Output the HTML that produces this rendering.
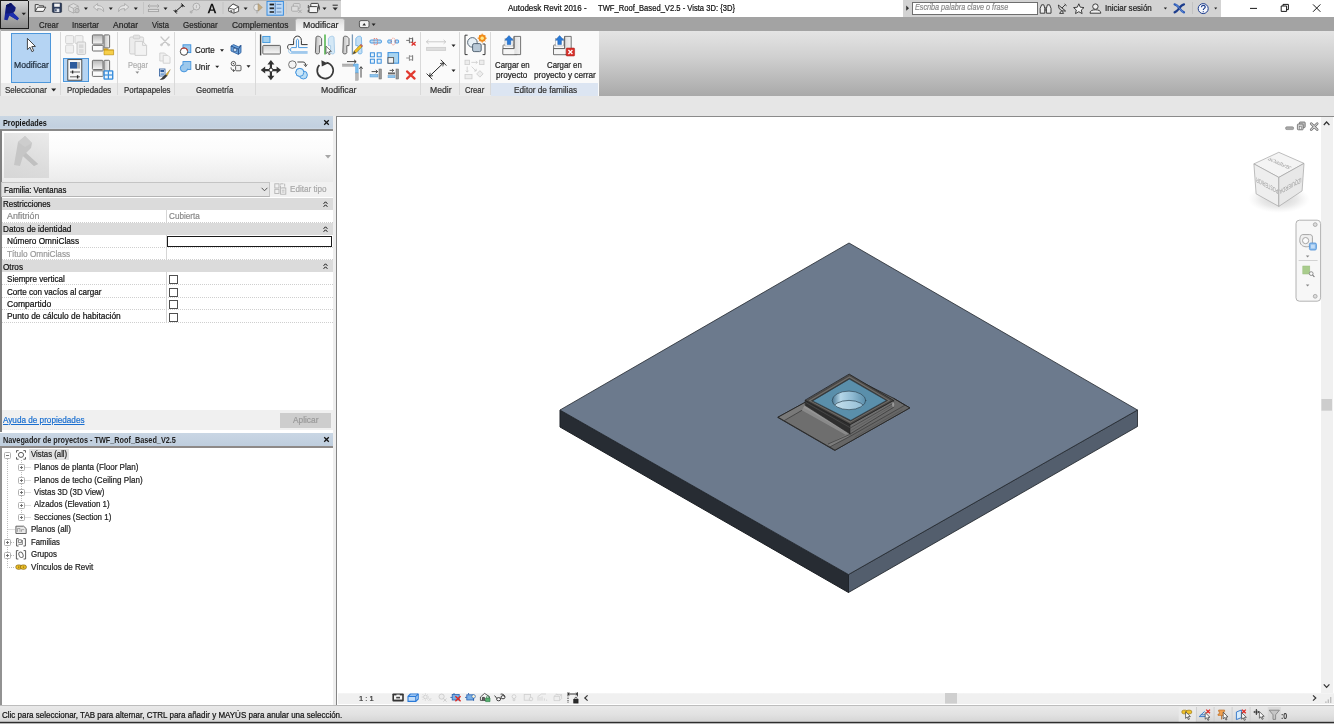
<!DOCTYPE html>
<html>
<head>
<meta charset="utf-8">
<title>Autodesk Revit 2016</title>
<style>
html,body{margin:0;padding:0;overflow:hidden;}
body{width:1334px;height:724px;overflow:hidden;position:relative;background:#e6e6e6;font-family:"Liberation Sans",sans-serif;font-size:8.5px;color:#222;}
.a{position:absolute;}
.t{position:absolute;white-space:nowrap;line-height:12px;height:12px;transform-origin:0 50%;-webkit-text-stroke:0.22px currentColor;}
svg{position:absolute;overflow:visible;}
/* title bar */
#titlebar{left:0;top:0;width:1334px;height:16.7px;background:#fff;}
#qat{left:28px;top:0;width:313px;height:16.7px;background:#d3d3d3;}
#appbtn{left:0;top:0;width:28.6px;height:28.6px;background:linear-gradient(#d6d6d6,#b4b4b4 40%,#8e8e8e);border:1px solid #1c1c1c;border-right-width:0.7px;border-bottom-width:0.8px;box-sizing:border-box;}
#info{left:903px;top:0;width:318px;height:16.7px;background:#d3d3d3;}
#search{left:912px;top:1.5px;width:126px;height:13.5px;background:#fff;border:1px solid #6e6e6e;box-sizing:border-box;}
/* tab bar */
#tabbar{left:0;top:16.7px;width:1334px;height:14.1px;background:#a3a3a3;}
#acttab{left:296.2px;top:19.3px;width:47.8px;height:11.6px;background:linear-gradient(#dadada,#ececec 50%,#f6f6f6);border-radius:1.5px 1.5px 0 0;box-shadow:0 0 0 0.6px #c4c4c4;}
.tab{top:19px;color:#1a1a1a;font-size:8.8px;}
/* ribbon */
#ribbon{left:0;top:30.6px;width:598.5px;height:65.4px;background:#fafafa;}
#ribbonR{left:598.5px;top:30.8px;width:735.5px;height:65.2px;background:linear-gradient(#e4e4e4,#d0d0d0 40%,#a9a9a9);}
#ptitles{left:0;top:83px;width:598px;height:13px;background:#ebebeb;}
.pt{top:85px;color:#333;font-size:8.6px;}
.sep{top:32px;width:1px;height:63px;background:#d9d9d9;}
/* left dock */
#leftdock{left:0;top:116px;width:333.4px;height:590px;background:#fff;}
.ptitle{left:0;width:334px;height:12px;background:#c9d6e4;}
.hdr{left:2px;width:331px;height:12px;background:#dbdbdb;}
.chev{width:7px;height:8px;}
.vdiv{left:166px;width:1px;background:#d6d6d6;}
.hl{left:2px;width:331px;height:0;border-top:1px dotted #cfcfcf;}
.cb{left:169.3px;width:8.6px;height:8.6px;border:1px solid #505050;box-sizing:border-box;background:#fff;}
/* viewport */
#vp{left:336.3px;top:115.8px;width:997.7px;height:590px;background:#fff;border-left:1.7px solid #848484;border-top:1.4px solid #8a8a8a;box-sizing:border-box;}
#vscroll{left:1321.1px;top:117px;width:12px;height:576px;background:#f0f0f0;}
#vbar{left:338px;top:692.6px;width:996px;height:11.2px;background:linear-gradient(#f6f6f6,#f0f0f0 12%,#f0f0f0);}
/* status */
#status{left:0;top:705px;width:1334px;height:19px;background:linear-gradient(#e9e9e9,#e2e2e2 45%,#d2d2d2);border-top:1px solid #bdbdbd;box-sizing:border-box;}
</style>
</head>
<body>
<div class="a" id="titlebar"></div>
<div class="a" id="qat"></div>
<div class="a" id="info"></div>
<div class="a" id="search"></div>
<div class="a" id="tabbar"></div>
<div class="a" id="acttab"></div>
<div class="a" id="appbtn"></div>
<div class="a" id="ribbon"></div>
<div class="a" id="ribbonR"></div>
<div class="a" id="ptitles"></div>
<svg style="left:0;top:0" width="1334" height="32" viewBox="0 0 1334 32">
  <defs>
    <g id="dd"><polygon points="-2,-1 2,-1 0,1.4" fill="#222"/></g>
  </defs>
  <!-- top hairline on QAT -->
  <rect x="28" y="0" width="313" height="1" fill="#b4b4b4"/>
  <!-- R logo -->
  <g>
    <polygon points="6.1,5.2 10.8,3.1 15.5,7.5 15,10.8 13.1,12.7 18.8,18.3 17.4,20.2 9.4,15.5 7.5,20.2 4.2,19.7" fill="#17249a"/>
    <polygon points="6.1,5.2 10.8,3.1 15.5,7.5 15,10.8 13.1,12.7 9.8,13.4 5.6,13.6" fill="#101a78"/>
    <polygon points="6.1,5.2 10.8,3.1 12.4,4.6 8.2,7.4" fill="#0b135c"/>
    <polygon points="9.8,13.4 13.1,12.7 18.8,18.3 17.4,20.2 9.4,15.5" fill="#1c2eae"/>
    <polygon points="21.6,12.8 26,12.8 23.8,15.2" fill="#222"/>
  </g>
  <!-- open folder -->
  <g stroke="#333" stroke-width="0.9" fill="#f2f2f2" stroke-linejoin="round">
    <path d="M35.2,11.4 V4.6 H38.4 L39.4,5.8 H43.6 V7.2"/>
    <path d="M35.2,11.4 L37.6,7.2 H45.8 L43.4,11.4 Z" fill="#fafafa"/>
  </g>
  <!-- save -->
  <g>
    <rect x="52.4" y="3" width="9.2" height="9.4" rx="0.8" fill="#2c3c5c" stroke="#1c2638" stroke-width="0.6"/>
    <rect x="54.2" y="3.6" width="5.6" height="3.2" fill="#f4f4f4"/>
    <rect x="54.6" y="8.6" width="4.8" height="3.4" fill="#e2e6ee"/>
    <rect x="55.2" y="9.2" width="1.4" height="2.2" fill="#2c3c5c"/>
  </g>
  <!-- sync (disabled) -->
  <g stroke="#a6a6a6" stroke-width="0.8" fill="#dedede" stroke-linejoin="round">
    <path d="M68.6,6 L73.4,3.6 L78.2,6 V10.6 L73.4,13 L68.6,10.6 Z"/>
    <path d="M68.6,6 L73.4,8.4 L78.2,6 M73.4,8.4 V13" fill="none"/>
    <circle cx="77" cy="10.6" r="2.2" fill="#c4c4c4" stroke="#a0a0a0"/>
  </g>
  <use href="#dd" x="85.9" y="8.6"/>
  <!-- undo -->
  <path d="M93.4,7 L97.6,3.6 V5.6 C101.6,5.6 104,7.6 103.6,11.6 C102.6,9.4 100.6,8.6 97.6,8.6 V10.6 Z" fill="#e4e4e4" stroke="#a4a4a4" stroke-width="0.8" stroke-linejoin="round"/>
  <use href="#dd" x="110.8" y="8.6"/>
  <!-- redo -->
  <path d="M128.8,7 L124.6,3.6 V5.6 C120.6,5.6 118.2,7.6 118.6,11.6 C119.6,9.4 121.6,8.6 124.6,8.6 V10.6 Z" fill="#e4e4e4" stroke="#a4a4a4" stroke-width="0.8" stroke-linejoin="round"/>
  <use href="#dd" x="135.8" y="8.6"/>
  <rect x="143" y="2" width="1" height="12" fill="#c4c4c4"/>
  <!-- aligned dimension (grey) -->
  <g stroke="#a2a2a2" stroke-width="0.9" fill="none">
    <path d="M148,6 H159 M149.6,4.4 L148,6 L149.6,7.6 M157.4,4.4 L159,6 L157.4,7.6"/>
    <rect x="148.4" y="9.4" width="10.2" height="2.2" fill="#dcdcdc"/>
  </g>
  <use href="#dd" x="165.5" y="8.6"/>
  <!-- measure -->
  <g stroke="#1e1e1e" stroke-width="1" fill="none">
    <path d="M175.2,11.8 L183,5"/>
    <path d="M173.6,10 L176.8,13.6 M181.4,3.4 L184.6,7" stroke-width="0.9"/>
    <path d="M175.2,11.8 L175.6,9.6 M175.2,11.8 L177.4,11.6 M183,5 L180.8,5.2 M183,5 L182.6,7.2" stroke-width="0.8"/>
  </g>
  <!-- tag (grey) -->
  <g stroke="#a8a8a8" stroke-width="0.9" fill="none">
    <circle cx="196.4" cy="6.6" r="3.4" fill="#dedede"/>
    <path d="M194,9.2 L191.4,11.6"/>
    <circle cx="191.2" cy="12" r="1" fill="#c8c8c8"/>
    <path d="M196.4,5 V8.2" stroke-width="0.7"/>
  </g>
  <!-- A text -->
  <path d="M207.6,13.2 L211.1,3.8 H212.8 L216.3,13.2 H214.5 L213.7,10.8 H210.2 L209.4,13.2 Z M210.7,9.4 H213.2 L211.95,5.6 Z" fill="#151515"/>
  <rect x="222.5" y="2" width="1" height="12" fill="#c4c4c4"/>
  <!-- 3D house -->
  <g stroke="#3a3a3a" stroke-width="0.8" stroke-linejoin="round">
    <path d="M228.6,8 L233,4 L238.6,6.8 V11.4 L233.6,13.2 L228.6,11.2 Z" fill="#f6f6f6"/>
    <path d="M228.6,8 L233,4 L238.6,6.8 L234,9.4 Z" fill="#fdfdfd"/>
    <path d="M234,9.4 V13.2" fill="none"/>
    <path d="M230.4,9.8 V12 L232.2,12.6 V10.4 Z" fill="#6a6a6a" stroke="none"/>
  </g>
  <use href="#dd" x="245.6" y="8.6"/>
  <!-- section -->
  <g>
    <circle cx="257" cy="7.4" r="3.3" fill="#e8e8e8" stroke="#a2a2a2" stroke-width="0.8"/>
    <polygon points="258,3.6 262.4,7.4 258,11.2" fill="#c4ab82" stroke="#a09070" stroke-width="0.5"/>
    <path d="M257,10.8 V13.4" stroke="#9a9a9a" stroke-width="0.8"/>
  </g>
  <!-- thin lines (active) -->
  <rect x="267" y="1.4" width="16.4" height="13.8" fill="#bcd9f6" stroke="#3a8ee0" stroke-width="1"/>
  <g>
    <rect x="269.6" y="3.6" width="4.4" height="1.8" fill="#1a1a1a"/>
    <rect x="269.6" y="7.4" width="4.4" height="1.8" fill="#2a2a2a"/>
    <rect x="269.6" y="11.2" width="4.4" height="1.6" fill="#2a2a2a"/>
    <path d="M275.2,2.6 V13.8" stroke="#2a5a9a" stroke-width="0.7"/>
    <path d="M276.6,4.4 H281.4 M276.6,8.2 H281.4" stroke="#3a6aaa" stroke-width="0.7"/>
    <rect x="276.6" y="11.2" width="4.8" height="1.6" fill="#8aa6c8"/>
  </g>
  <rect x="286" y="2" width="1" height="12" fill="#cccccc"/>
  <!-- close hidden (grey) -->
  <g stroke="#a8a8a8" stroke-width="0.9" fill="#dcdcdc">
    <rect x="293.4" y="3.6" width="6.6" height="4.8" rx="0.8"/>
    <rect x="291.6" y="6.2" width="6.6" height="5" rx="0.8"/>
    <path d="M298.4,9.8 L301.6,13 M301.6,9.8 L298.4,13" fill="none" stroke-width="1"/>
  </g>
  <!-- switch windows -->
  <g stroke="#2e2e2e" stroke-width="0.9" fill="#f4f4f4">
    <rect x="310.8" y="3.4" width="7.6" height="5.4" rx="0.8"/>
    <rect x="309" y="6.6" width="8.6" height="6" rx="0.8"/>
    <path d="M318.6,5.2 C319.8,6.6 319.8,9 318.8,10.4 M308.4,5 L308.2,8 M308.2,10 V12.4" fill="none" stroke-width="0.8"/>
  </g>
  <use href="#dd" x="324.5" y="8.6"/>
  <path d="M332.6,5.2 H337.8" stroke="#2a2a2a" stroke-width="1"/>
  <polygon points="332.6,7.4 337.8,7.4 335.2,10.4" fill="#2a2a2a"/>
  <!-- tab-bar small icon -->
  <rect x="359.4" y="20.6" width="9.6" height="7" rx="1.6" fill="#f2f2f2" stroke="#3a3a3a" stroke-width="0.8"/>
  <polygon points="362.4,25.4 366,25.4 364.2,23" fill="#2a2a2a"/>
  <use href="#dd" x="373.6" y="24.6"/>
  <!-- info center -->
  <polygon points="906.2,5.6 906.2,10.8 909,8.2" fill="#333"/>
  <g stroke="#2e2e2e" stroke-width="0.9" fill="none">
    <!-- binoculars -->
    <path d="M1040.2,13.2 V8.4 L1041.6,4.8 H1043.8 L1044.8,8.4 V13.2 Z M1046.4,13.2 V8.4 L1047.4,4.8 H1049.6 L1051,8.4 V13.2 Z" fill="#ededed"/>
    <path d="M1044.8,8 H1046.4 M1044.8,10 H1046.4" />
    <!-- satellite -->
    <path d="M1058.4,5 C1058.4,9.4 1061.4,11.4 1065.6,11 L1058.4,5 M1062,8 L1065.4,4.6 M1064.6,4 L1066.6,5.8" />
    <path d="M1059.6,13.4 L1061.6,10.6 L1063.6,13.4 Z" fill="#ededed"/>
    <!-- star -->
    <path d="M1078.8,3.8 L1080.3,7.2 L1084,7.6 L1081.3,10 L1082.1,13.6 L1078.8,11.7 L1075.5,13.6 L1076.3,10 L1073.6,7.6 L1077.3,7.2 Z" fill="#f0f0f0" stroke-linejoin="round"/>
    <!-- user -->
    <circle cx="1095.4" cy="6.6" r="2.7" fill="#f0f0f0"/>
    <path d="M1090,13.2 C1090,10.6 1092.4,9.8 1095.4,9.8 C1098.4,9.8 1100.8,10.6 1100.8,13.2 Z" fill="#f0f0f0"/>
  </g>
  <polygon points="1163.8,7.4 1167,7.4 1165.4,9.4" fill="#222"/>
  <!-- exchange X -->
  <g fill="none" stroke-linecap="round">
    <path d="M1174.6,4.4 C1178.6,5 1180,11 1184,12.4" stroke="#2a58b4" stroke-width="2.2"/>
    <path d="M1184,4.4 C1180,5 1178.6,11 1174.6,12.4" stroke="#1c3c8c" stroke-width="2.2"/>
    <path d="M1176,4.6 C1179,6 1180,10.6 1183,12.2" stroke="#7aa2e8" stroke-width="0.7"/>
  </g>
  <rect x="1192" y="2" width="1" height="12" fill="#c2c2c2"/>
  <!-- help -->
  <circle cx="1203.2" cy="8.6" r="5" fill="#f4f6fc" stroke="#1c3c8c" stroke-width="1"/>
  <path d="M1201.4,7.2 C1201.4,4.8 1205.2,4.8 1205.2,7 C1205.2,8.4 1203.3,8.4 1203.3,10 M1203.3,11.2 V12.2" fill="none" stroke="#1c3c8c" stroke-width="1.2"/>
  <polygon points="1214.2,7.6 1217.2,7.6 1215.7,9.4" fill="#222"/>
  <!-- window controls -->
  <g stroke="#1a1a1a" stroke-width="1" fill="none">
    <path d="M1250,8.4 H1257"/>
    <path d="M1281.2,6 H1286.6 V11.4 H1281.2 Z M1283,6 V4.4 H1288.4 V9.6 H1286.6"/>
    <path d="M1313,4.4 L1320.4,11.8 M1320.4,4.4 L1313,11.8"/>
  </g>

</svg>

<!-- ribbon frame -->
<div class="a" style="left:0;top:30px;width:1px;height:66px;background:#c8c8c8;"></div>
<div class="a" style="left:491px;top:83px;width:107px;height:13px;background:#dce5f2;"></div>
<div class="a sep" style="left:60px;"></div>
<div class="a sep" style="left:117px;"></div>
<div class="a sep" style="left:174px;"></div>
<div class="a sep" style="left:255px;"></div>
<div class="a sep" style="left:420px;"></div>
<div class="a sep" style="left:459px;"></div>
<div class="a sep" style="left:490px;"></div>
<!-- Modificar big button -->
<div class="a" style="left:11px;top:33px;width:40px;height:50px;background:#b5d4f3;border:1px solid #4d97db;box-sizing:border-box;"></div>
<!-- Properties active button -->
<div class="a" style="left:62.5px;top:58px;width:26.5px;height:24px;background:#b5d4f3;border:1px solid #4d97db;box-sizing:border-box;"></div>
<svg style="left:0;top:0" width="600" height="100" viewBox="0 0 600 100">
  <defs>
    <linearGradient id="gP" x1="0" y1="0" x2="0" y2="1"><stop offset="0" stop-color="#b8b8b8"/><stop offset="1" stop-color="#f6f6f6"/></linearGradient>
    <linearGradient id="gP2" x1="0" y1="0" x2="1" y2="0"><stop offset="0" stop-color="#c4c4c4"/><stop offset="1" stop-color="#f4f4f4"/></linearGradient>
    <g id="dd2"><polygon points="-2,-1.1 2,-1.1 0,1.3" fill="#222"/></g>
    <g id="panels">
      <rect x="0.4" y="0.5" width="10.6" height="9.2" rx="0.8" fill="url(#gP)" stroke="#6e6e6e" stroke-width="1"/>
      <rect x="12" y="0.5" width="5.6" height="13" rx="0.8" fill="url(#gP2)" stroke="#6e6e6e" stroke-width="1"/>
      <rect x="0.4" y="11" width="10.8" height="5.6" rx="0.8" fill="#fafafa" stroke="#6e6e6e" stroke-width="1"/>
    </g>
  </defs>
  <!-- cursor -->
  <path d="M27.4,38.4 V49.6 L30,47.2 L31.9,51.6 L33.7,50.8 L31.8,46.6 L35.4,46.4 Z" fill="#fff" stroke="#333" stroke-width="0.9" stroke-linejoin="round"/>
  <polygon points="51.2,88.6 56.2,88.6 53.7,91.4" fill="#222"/>
  <!-- type properties (disabled) -->
  <g stroke="#d0d0d0" stroke-width="0.9" fill="#f0f0f0">
    <rect x="65.6" y="35.6" width="8" height="8" rx="1.2"/>
    <rect x="75" y="35.6" width="8" height="8" rx="1.2"/>
    <rect x="65.6" y="45" width="8" height="8" rx="1.2"/>
    <rect x="77" y="42" width="8.6" height="12.4" rx="1" fill="#ececec" stroke="#c4c4c4"/>
    <rect x="79" y="44.4" width="4.4" height="3.6" fill="#d8d8d8" stroke="none"/>
    <path d="M79,50 H83.6 M79,52 H83.6" stroke="#c8c8c8"/>
  </g>
  <!-- family category -->
  <use href="#panels" x="92" y="34.4"/>
  <g>
    <path d="M104,48.8 H107.6 L108.4,49.8 H113.6 V54.8 H104 Z" fill="#d8a418" stroke="#b08410" stroke-width="0.6"/>
    <rect x="104.4" y="50.6" width="8.8" height="3.8" fill="#f6cf4a"/>
  </g>
  <!-- properties (active) -->
  <rect x="67.8" y="59.6" width="14" height="20.6" fill="#f8f8f8" stroke="#3c3c3c" stroke-width="0.9"/>
  <rect x="70" y="62" width="7" height="6.6" fill="#2c5a9c"/>
  <rect x="77" y="62" width="3" height="6.6" fill="#b0b0b0"/>
  <path d="M70,72 H80 M70,76.8 H80" stroke="#3a3a3a" stroke-width="0.8"/>
  <path d="M72.6,70.4 V73.6 M77.6,75.2 V78.4" stroke="#2a2a2a" stroke-width="1.4"/>
  <!-- family types -->
  <use href="#panels" x="92" y="59.8"/>
  <g fill="#eaf4fc" stroke="#3a8edc" stroke-width="1.2">
    <rect x="103.4" y="70.2" width="10" height="9.6" rx="1.2" fill="#3a8edc" stroke="none"/>
    <rect x="104.8" y="71.6" width="3" height="2.8" stroke="none"/>
    <rect x="109" y="71.6" width="3" height="2.8" stroke="none"/>
    <rect x="104.8" y="75.6" width="3" height="2.8" stroke="none"/>
    <rect x="109" y="75.6" width="3" height="2.8" stroke="none"/>
  </g>
  <!-- paste (disabled) -->
  <g stroke="#cfcfcf" stroke-width="1" fill="#ececec" stroke-linejoin="round">
    <rect x="129.6" y="37" width="14" height="17" rx="1.4"/>
    <rect x="133.4" y="35.2" width="6.4" height="3.6" rx="1" fill="#e4e4e4"/>
    <path d="M135,41.4 H142.6 L146.6,45.4 V55.4 H135 Z" fill="#f2f2f2"/>
    <path d="M142.6,41.4 V45.4 H146.6" fill="none"/>
  </g>
  <polygon points="135.4,71.6 139.2,71.6 137.3,73.8" fill="#8c8c8c"/>
  <!-- scissors (disabled) -->
  <g stroke="#c8c8c8" stroke-width="1.3" fill="none" stroke-linecap="round">
    <path d="M161,37 L168.6,45 M169,37 L161.4,45"/>
    <circle cx="161.4" cy="44.8" r="1" stroke-width="0.8"/><circle cx="168.6" cy="44.8" r="1" stroke-width="0.8"/>
  </g>
  <!-- copy (disabled) -->
  <g stroke="#cfcfcf" stroke-width="0.9" fill="#efefef" stroke-linejoin="round">
    <path d="M159.8,53 H164.6 L166.6,55 V61 H159.8 Z"/>
    <path d="M163.2,55.4 H168 L170,57.4 V63.2 H163.2 Z" fill="#f4f4f4"/>
  </g>
  <!-- match properties -->
  <g>
    <rect x="159.4" y="69" width="5.6" height="7" fill="#f4f8fc" stroke="#2c5a9c" stroke-width="0.8"/>
    <rect x="160.4" y="70" width="3.6" height="2.2" fill="#2c5a9c"/>
    <rect x="160.4" y="73.2" width="3.6" height="1.8" fill="#7aa4d6"/>
    <path d="M170.2,69.6 L165.8,74.6 L167.2,75.8 Z" fill="#e8b830" stroke="#8a6a20" stroke-width="0.4"/>
    <path d="M165.8,74.4 L167.4,75.8 L164.6,78.8 C163,80 160.6,79.6 159.6,79.4 C161.6,78.6 162.4,77.2 163.4,76.2 Z" fill="#3a3a3a"/>
  </g>
  <!-- Corte icon -->
  <rect x="183" y="44.8" width="7.8" height="7.8" fill="#9cc8ec" stroke="#3a8edc" stroke-width="0.9"/>
  <circle cx="184" cy="51.6" r="3.7" fill="#fff" stroke="#333" stroke-width="0.9"/>
  <path d="M181.2,49.2 A3.7,3.7 0 0 1 187.6,50.8" fill="none" stroke="#e03a2a" stroke-width="1"/>
  <use href="#dd2" x="222" y="50.4"/>
  <!-- Unir icon -->
  <rect x="183" y="61.6" width="7.8" height="7.8" fill="#9cc8ec" stroke="#3a8edc" stroke-width="0.9"/>
  <circle cx="184" cy="68.2" r="3.7" fill="#9cc8ec" stroke="#3a8edc" stroke-width="0.9"/>
  <rect x="183.6" y="62.2" width="6.6" height="6.4" fill="#9cc8ec"/>
  <use href="#dd2" x="217.2" y="66.8"/>
  <!-- geometry right-top (wall joins) -->
  <g stroke="#2a5a9c" stroke-width="0.8" stroke-linejoin="round">
    <path d="M231,46 L233.6,44.6 L238.4,46.8 L241,45.4 V52.6 L238.4,54.4 L231,51 Z" fill="#6aa4dc"/>
    <path d="M231,46 L238.4,49.2 V54.4 M238.4,49.2 L241,45.4" fill="none" stroke="#1c3e78"/>
    <rect x="233.4" y="48.4" width="3.2" height="3" fill="#cfe4f6" stroke="#1c3e78" stroke-width="0.6"/>
  </g>
  <!-- geometry right-bottom -->
  <g stroke="#3a3a3a" stroke-width="0.8" fill="#f2f2f2">
    <circle cx="233.4" cy="63.6" r="2.2"/>
    <circle cx="233.4" cy="63.6" r="0.7" fill="#3a3a3a" stroke="none"/>
    <rect x="235.6" y="65.4" width="5.4" height="5.4" rx="1"/>
    <path d="M231,67.4 C231,69.8 232.4,70.6 234.4,70.6 M233,69.4 L234.6,70.6 L233,71.8" fill="none"/>
  </g>
  <use href="#dd2" x="248.5" y="66.4"/>
  <defs>
    <linearGradient id="gA" x1="0" y1="0" x2="0" y2="1"><stop offset="0" stop-color="#d0d0d0"/><stop offset="1" stop-color="#f8f8f8"/></linearGradient>
    <linearGradient id="gM" x1="0" y1="0" x2="1" y2="0"><stop offset="0" stop-color="#bdbdbd"/><stop offset="1" stop-color="#f2f2f2"/></linearGradient>
  </defs>
  <!-- align -->
  <path d="M260.6,34.4 V55.4" stroke="#444" stroke-width="1.4"/>
  <rect x="262.8" y="36.4" width="7.2" height="6.2" fill="#a4d0ee" stroke="#3a94dc" stroke-width="0.9"/>
  <rect x="262.8" y="45.4" width="17.6" height="8.6" rx="0.8" fill="url(#gA)" stroke="#555" stroke-width="0.9"/>
  <!-- offset -->
  <g fill="none" stroke-linejoin="round">
    <path d="M307.6,44.6 H301.4 V40.6 C301.4,34.6 293.6,34.6 293.6,40.6 V44.6 H289.4 C287,44.6 287,49 289.4,49.6" stroke="#333" stroke-width="1"/>
    <path d="M307.6,47.6 H298.6 V41 C298.6,38.6 296.4,38.6 296.4,41 V47.6 H291.6 C290.2,47.6 290.2,52 291.6,52 H307.6" stroke="#4a9ae0" stroke-width="1"/>
    <path d="M289.4,49.6 C288,50.4 288.6,53 290.4,53.4 H307.6" stroke="#8abfe8" stroke-width="0.8"/>
  </g>
  <!-- mirror pick axis -->
  <g stroke-linejoin="round">
    <path d="M316,37.6 C316,35.6 320.2,35.6 321.6,38.6 V45.6 H319.4 V52.6 C319.4,54.4 315.4,54.4 315.4,52.6 Z" fill="url(#gM)" stroke="#555" stroke-width="0.9"/>
    <path d="M334,37.6 C334,35.6 329.8,35.6 328.4,38.6 V45.6 H330.6 V52.6 C330.6,54.4 334.6,54.4 334.6,52.6 Z" fill="#d4e8f6" stroke="#9cc4e4" stroke-width="0.8"/>
    <path d="M325,34.4 V54.6" stroke="#3fae3a" stroke-width="1.4"/>
    <path d="M326,46.2 V53.6 L327.8,52 L329,54.8 L330.2,54.2 L329,51.6 L331.4,51.4 Z" fill="#fff" stroke="#444" stroke-width="0.7"/>
  </g>
  <!-- mirror draw axis -->
  <g stroke-linejoin="round">
    <path d="M343.4,37.6 C343.4,35.6 347.6,35.6 349,38.6 V45.6 H346.8 V52.6 C346.8,54.4 342.8,54.4 342.8,52.6 Z" fill="url(#gM)" stroke="#555" stroke-width="0.9"/>
    <path d="M361.4,37.6 C361.4,35.6 357.2,35.6 355.8,38.6 V45.6 H358 V52.6 C358,54.4 362,54.4 362,52.6 Z" fill="#c4dff4" stroke="#6aaee6" stroke-width="0.8"/>
    <path d="M352.4,34.4 V54.6" stroke="#7a9ab8" stroke-width="1.3"/>
    <path d="M353,54 L354.2,51 L360.2,45 L362,46.8 L356,52.8 Z" fill="#f0c020" stroke="#9a7410" stroke-width="0.6"/>
    <path d="M353,54 L354.2,51 L356,52.8 Z" fill="#444"/>
    <path d="M360.2,45 L361,44.2 L362.8,46 L362,46.8 Z" fill="#e06a5a" stroke="#9a3a30" stroke-width="0.4"/>
  </g>
  <!-- small col 1 -->
  <g>
    <rect x="370" y="40" width="11.4" height="3" rx="1" fill="#bfe0f6" stroke="#3a8edc" stroke-width="0.9"/>
    <rect x="374" y="38.6" width="3.4" height="6" fill="none" stroke="#e05a4a" stroke-width="0.7" stroke-dasharray="1.2 0.8"/>
    <g fill="#e8f4fc" stroke="#3a8edc" stroke-width="1">
      <rect x="370.4" y="52.8" width="4" height="4"/><rect x="377.2" y="52.8" width="4" height="4"/>
      <rect x="370.4" y="59.2" width="4" height="4"/><rect x="377.2" y="59.2" width="4" height="4"/>
    </g>
    <path d="M371.6,71.6 H377.6 M375.8,70 L377.6,71.6 L375.8,73.2" fill="none" stroke="#333" stroke-width="0.9"/>
    <rect x="370" y="74.4" width="8" height="2.6" fill="#8ec4ec" stroke="#5a9ad0" stroke-width="0.5"/>
    <rect x="379" y="69" width="2.4" height="10" fill="#9a9a9a" stroke="#666" stroke-width="0.5"/>
  </g>
  <!-- small col 2 -->
  <g>
    <rect x="387.8" y="40" width="3.6" height="3" rx="0.8" fill="#bfe0f6" stroke="#3a8edc" stroke-width="0.9"/>
    <rect x="395" y="40" width="3.6" height="3" rx="0.8" fill="#bfe0f6" stroke="#3a8edc" stroke-width="0.9"/>
    <ellipse cx="393.2" cy="41.5" rx="2.2" ry="3.4" fill="none" stroke="#e05a4a" stroke-width="0.7" stroke-dasharray="1.2 0.8"/>
    <rect x="388" y="52.6" width="10.6" height="10.6" fill="#a8d4f0" stroke="#3a8edc" stroke-width="1"/>
    <rect x="388" y="57.6" width="5.6" height="5.6" fill="#f2f2f2" stroke="#555" stroke-width="0.9"/>
    <path d="M389.6,70.4 H393.6 M392,69 L393.6,70.4 L392,71.8" fill="none" stroke="#333" stroke-width="0.8"/>
    <rect x="388" y="72.4" width="7" height="2" fill="#6a6a6a"/>
    <rect x="388" y="75.4" width="7" height="2.4" fill="#8ec4ec" stroke="#5a9ad0" stroke-width="0.4"/>
    <rect x="396" y="69" width="2.6" height="10" fill="#9a9a9a" stroke="#666" stroke-width="0.5"/>
  </g>
  <!-- small col 3 : unpin, pin, delete -->
  <g fill="none" stroke="#555" stroke-width="0.8">
    <path d="M406.2,40.4 H409.4 M409.4,37.6 V43.2 M409.4,38.6 H412.6 V42.2 H409.4 M412.6,37.4 V43.4"/>
    <path d="M411.6,42 L415.6,45.6 M415.6,42 L411.6,45.6" stroke="#e0302a" stroke-width="1.3"/>
    <path d="M406.2,58 H409.4 M409.4,55.2 V60.8 M409.4,56.2 H412.6 V59.8 H409.4 M412.6,55 V61" stroke="#7a7a7a"/>
  </g>
  <path d="M407,71.4 L414.6,78.6 M414.6,71.4 L407,78.6" stroke="#e23a30" stroke-width="2.2" stroke-linecap="round"/>
  <!-- move -->
  <g fill="#333">
    <polygon points="270.9,59.9 274.4,64.4 272,64.4 272,68.4 269.8,68.4 269.8,64.4 267.4,64.4"/>
    <polygon points="270.9,80.2 274.4,75.7 272,75.7 272,71.7 269.8,71.7 269.8,75.7 267.4,75.7"/>
    <polygon points="260.7,70.05 265.2,66.55 265.2,68.95 269.2,68.95 269.2,71.15 265.2,71.15 265.2,73.55"/>
    <polygon points="281.1,70.05 276.6,66.55 276.6,68.95 272.6,68.95 272.6,71.15 276.6,71.15 276.6,73.55"/>
    <rect x="269.4" y="68.55" width="3" height="3" fill="#fff" stroke="#333" stroke-width="0.7"/>
  </g>
  <!-- copy -->
  <circle cx="292.4" cy="64.6" r="3.8" fill="#f4f4f4" stroke="#555" stroke-width="0.8"/>
  <path d="M297.4,62 H303 C305,62 305.6,63.4 305.6,65.4 M304,64.4 L305.6,66.6 L307.2,64.4" fill="none" stroke="#333" stroke-width="0.9"/>
  <circle cx="299.8" cy="72.4" r="4" fill="#b8dcf4" stroke="#3a8edc" stroke-width="0.9"/>
  <circle cx="303.4" cy="75" r="4" fill="#b8dcf4" stroke="#3a8edc" stroke-width="0.9"/>
  <circle cx="299.8" cy="72.4" r="4" fill="#cfe8f8" stroke="#3a8edc" stroke-width="0.9"/>
  <!-- rotate -->
  <path d="M326.4,62.6 A8,8 0 1 1 319.4,65" fill="none" stroke="#3a3a3a" stroke-width="1.7"/>
  <polygon points="321.4,60.2 328,63.4 321.8,66.4" fill="#3a3a3a"/>
  <!-- trim/extend corner -->
  <g>
    <path d="M347,61.6 H356 M354,59.8 L356.2,61.6 L354,63.4" fill="none" stroke="#333" stroke-width="0.9"/>
    <rect x="342.6" y="64" width="11" height="2.2" fill="#b4b4b4" stroke="#8a8a8a" stroke-width="0.4"/>
    <path d="M353.6,64 H358.2 V73 H355.6 V66.2 H353.6 Z" fill="#7fc0ee" stroke="#4a9ae0" stroke-width="0.5"/>
    <rect x="355.6" y="73" width="2.6" height="7.2" fill="#b4b4b4" stroke="#8a8a8a" stroke-width="0.4"/>
    <path d="M361,77.6 V67 M359.4,68.8 L361,66.6 L362.6,68.8" fill="none" stroke="#333" stroke-width="0.9"/>
  </g>
  <!-- measure top (disabled) -->
  <g stroke="#c6c6c6" stroke-width="0.9" fill="none">
    <path d="M426.4,41.8 H445.8 M428.6,39.8 L426.4,41.8 L428.6,43.8 M443.6,39.8 L445.8,41.8 L443.6,43.8"/>
    <rect x="426.6" y="47.4" width="19" height="3" fill="#dedede" stroke="#cfcfcf"/>
  </g>
  <use href="#dd2" x="453.5" y="45.6"/>
  <!-- measure bottom -->
  <g stroke="#222" stroke-width="1" fill="none">
    <path d="M429.4,76.4 L443.6,62.8"/>
    <path d="M426.6,73.6 L432.4,79.4 M440.8,59.8 L446.4,65.6" stroke-width="0.9"/>
    <path d="M429.4,76.4 L430.2,72.8 M429.4,76.4 L433,75.6 M443.6,62.8 L440,63.6 M443.6,62.8 L442.8,66.4" stroke-width="0.8"/>
  </g>
  <use href="#dd2" x="453.5" y="70.6"/>
  <!-- create group -->
  <g fill="none" stroke="#3a3a3a" stroke-width="1">
    <path d="M467.6,35.2 H465 V54.6 H467.6 M482.6,44 H485 V54.6 H482.6"/>
    <circle cx="472.4" cy="42.4" r="4.8" fill="#e8f0f6" stroke="#4a5a6a" stroke-width="0.9"/>
    <rect x="472.6" y="43.6" width="8.6" height="8" rx="1.6" fill="#b8c8d6" stroke="#4a5a6a" stroke-width="0.9"/>
  </g>
  <g>
    <circle cx="482.2" cy="38.2" r="3.6" fill="#f08a1a"/>
    <circle cx="482.2" cy="38.2" r="1.8" fill="#ffe27a"/>
    <path d="M482.2,33.6 V42.8 M477.6,38.2 H486.8 M479,35 L485.4,41.4 M485.4,35 L479,41.4" stroke="#f08a1a" stroke-width="0.9"/>
    <circle cx="482.2" cy="38.2" r="1.6" fill="#ffe88a"/>
  </g>
  <!-- create bottom (disabled) -->
  <g stroke="#cdcdcd" stroke-width="0.8" fill="#ededed">
    <rect x="465" y="60.2" width="4.4" height="4.4"/>
    <rect x="479.6" y="60.2" width="4.4" height="4.4"/>
    <rect x="465" y="74.4" width="7" height="4.4"/>
    <rect x="477.6" y="71.6" width="4.6" height="4.6" transform="rotate(45 479.9 73.9)"/>
    <path d="M471.4,62.4 H477.4 M475.8,61 L477.4,62.4 L475.8,63.8 M467.2,66.6 V72 M465.8,70.6 L467.2,72.2 L468.6,70.6 M471.6,66.6 L476,71 M474,71 H476.2 V68.8" fill="none"/>
  </g>
  <!-- load into project -->
  <g id="loadp">
    <rect x="503" y="45" width="14.4" height="9.6" rx="0.6" fill="#fafafa" stroke="#666" stroke-width="0.9"/>
    <path d="M514,36.4 H520.6 V54.6 H503 V48.6 H514 Z" fill="url(#gM)" stroke="#666" stroke-width="0.9" stroke-linejoin="round"/>
    <rect x="503.4" y="49" width="11" height="5.2" fill="#f6f6f6"/>
    <path d="M503,48.6 H514 V36.4" fill="none" stroke="#666" stroke-width="0.9"/>
    <rect x="505" y="38.6" width="8" height="7.4" fill="#fdfdfd" stroke="#9a9a9a" stroke-width="0.5"/>
    <path d="M509,35.6 L513.2,40.2 H510.8 V44.6 H507.2 V40.2 H504.8 Z" fill="#2a7ad8" stroke="#1a5aa8" stroke-width="0.5"/>
  </g>
  <use href="#loadp" x="50.6" y="0"/>
  <rect x="566.2" y="48" width="8.4" height="8" rx="0.8" fill="#d8302a" stroke="#a01a16" stroke-width="0.5"/>
  <path d="M568.4,50 L572.4,54 M572.4,50 L568.4,54" stroke="#fff" stroke-width="1.3"/>

</svg>

<div class="a" id="leftdock"></div>
<!-- ===== PROPERTIES PANEL ===== -->
<div class="a" style="left:0;top:115.5px;width:333.4px;height:14px;background:linear-gradient(#cad7e4,#c2d0df 80%,#d4dde8);"></div>
<div class="a" style="left:0;top:129.3px;width:332.5px;height:1.5px;background:#8a8a8a;"></div>
<div class="a" style="left:0;top:130px;width:1.6px;height:302px;background:#808080;"></div>
<div class="a" style="left:2px;top:130.8px;width:331px;height:51.2px;background:linear-gradient(#ffffff,#fbfbfb 40%,#ebebeb);"></div>
<div class="a" style="left:333px;top:130px;width:1px;height:302px;background:#d8d8d8;"></div>
<!-- preview -->
<div class="a" style="left:4px;top:133px;width:45px;height:45px;background:linear-gradient(200deg,#ebebeb,#dcdcdc 60%,#d6d6d6);"></div>
<svg style="left:4px;top:133px" width="45" height="45" viewBox="0 0 45 45">
  <polygon points="14,9 21,3 28,10 27,15 22,20 34,31 30,33 19,23 16,33 10,32" fill="#c6c6c6"/>
  <polygon points="14,9 21,3 28,10 21,14" fill="#cdcdcd"/>
  <polygon points="19,23 22,20 34,31 30,33" fill="#c0c0c0"/>
</svg>
<svg style="left:325px;top:155px" width="6" height="4" viewBox="0 0 6 4"><polygon points="0,0 6,0 3,3.4" fill="#a6a6a6"/></svg>
<!-- close X -->
<svg style="left:323px;top:119px" width="7" height="7" viewBox="0 0 7 7"><path d="M1.2,1.2 L5.8,5.8 M5.8,1.2 L1.2,5.8" stroke="#111" stroke-width="1.25" fill="none"/></svg>
<!-- combo -->
<div class="a" style="left:1px;top:182px;width:269px;height:15px;background:#e5e5e5;border:1px solid #c4c4c4;border-bottom-color:#b4b4b4;box-sizing:border-box;"></div>
<svg style="left:261px;top:187px" width="7" height="5" viewBox="0 0 7 5"><path d="M0.6,0.8 L3.5,3.8 L6.4,0.8" stroke="#555" stroke-width="1" fill="none"/></svg>
<div class="a" style="left:270px;top:182px;width:63px;height:15px;background:#f1f1f1;"></div>
<svg style="left:274px;top:183px" width="13" height="12" viewBox="0 0 13 12"><g fill="none" stroke="#b4b4b4" stroke-width="0.9"><rect x="0.8" y="0.8" width="4.2" height="4.2"/><rect x="6.5" y="0.8" width="4.2" height="4.2" stroke-dasharray="3 1"/><rect x="0.8" y="6.3" width="4.2" height="4.2"/><rect x="6.6" y="5" width="5.2" height="6.2" fill="#f4f4f4"/><path d="M7.8,7.2h2.8M7.8,9h2.8"/></g></svg>
<!-- group headers -->
<div class="a hdr" style="top:198px;"></div>
<div class="a hdr" style="top:223px;"></div>
<div class="a hdr" style="top:260px;"></div>
<svg class="chev" style="left:322px;top:200px"><use href="#dchev"/></svg>
<svg class="chev" style="left:322px;top:225px"><use href="#dchev"/></svg>
<svg class="chev" style="left:322px;top:262px"><use href="#dchev"/></svg>
<svg width="0" height="0" style="left:0;top:0"><defs><g id="dchev"><path d="M1.6,3.8 L3.5,1.8 L5.4,3.8 M1.6,6.8 L3.5,4.8 L5.4,6.8" stroke="#111" stroke-width="1" fill="none"/></g></defs></svg>
<!-- grid lines -->
<div class="a" style="left:2px;top:210px;width:331px;height:112px;background:#fff;z-index:0;display:none"></div>
<div class="a vdiv" style="top:210px;height:13px;"></div>
<div class="a vdiv" style="top:235px;height:25px;"></div>
<div class="a vdiv" style="top:272px;height:50px;"></div>
<div class="a hl" style="top:222px;"></div>
<div class="a hl" style="top:247px;"></div>
<div class="a hl" style="top:259px;"></div>
<div class="a hl" style="top:284px;"></div>
<div class="a hl" style="top:297px;"></div>
<div class="a hl" style="top:309px;"></div>
<div class="a hl" style="top:322px;"></div>
<!-- selected value box -->
<div class="a" style="left:167px;top:236px;width:165px;height:11px;border:1px solid #1a1a1a;box-sizing:border-box;background:#fff;"></div>
<!-- checkboxes -->
<div class="a cb" style="top:275px;"></div>
<div class="a cb" style="top:288px;"></div>
<div class="a cb" style="top:300px;"></div>
<div class="a cb" style="top:313px;"></div>
<!-- bottom strip -->
<div class="a" style="left:1.6px;top:410.4px;width:331px;height:20px;background:#f0f0f0;"></div>
<div class="a" style="left:280px;top:412.8px;width:51px;height:15px;background:#cdcdcd;"></div>
<!-- ===== PROJECT BROWSER ===== -->
<div class="a" style="left:0;top:433.2px;width:333.6px;height:13.2px;background:linear-gradient(#c9d6e4,#bfcede);"></div>
<div class="a" style="left:0;top:446.3px;width:332.6px;height:1.7px;background:#8e8a88;"></div>
<div class="a" style="left:0;top:448px;width:1.6px;height:258px;background:#929292;"></div>
<div class="a" style="left:333px;top:449px;width:1px;height:257px;background:#d8d8d8;"></div>
<svg style="left:323.1px;top:435.8px" width="7" height="7" viewBox="0 0 7 7"><path d="M1.2,1.2 L5.8,5.8 M5.8,1.2 L1.2,5.8" stroke="#111" stroke-width="1.25" fill="none"/></svg>
<div class="a" style="left:29px;top:449px;width:40px;height:11px;background:#e2e2e2;"></div>
<svg style="left:0;top:0" width="334" height="724" viewBox="0 0 334 724">
  <g stroke="#bdbdbd" stroke-width="1" stroke-dasharray="1 1" fill="none">
    <path d="M7.5,459 V567.5 H15"/>
    <path d="M21.5,460 V517.5"/>
    <path d="M24.5,467.5 H31 M24.5,480.5 H31 M24.5,492.5 H31 M24.5,505.5 H31 M24.5,517.5 H31"/>
    <path d="M7.5,529.5 H15 M11,542.5 H15 M11,555.5 H15"/>
  </g>
  <g id="exps" fill="#fff" stroke="#a8a8a8" stroke-width="0.9">
    <rect x="4.5" y="452.5" width="6" height="6" rx="1"/>
    <rect x="18.5" y="464.5" width="6" height="6" rx="1"/>
    <rect x="18.5" y="477.5" width="6" height="6" rx="1"/>
    <rect x="18.5" y="489.5" width="6" height="6" rx="1"/>
    <rect x="18.5" y="502.5" width="6" height="6" rx="1"/>
    <rect x="18.5" y="514.5" width="6" height="6" rx="1"/>
    <rect x="4.5" y="539.5" width="6" height="6" rx="1"/>
    <rect x="4.5" y="552.5" width="6" height="6" rx="1"/>
  </g>
  <g stroke="#666" stroke-width="0.9" fill="none">
    <path d="M6,455.5 H9"/>
    <path d="M20,467.5 H23 M21.5,466 V469"/>
    <path d="M20,480.5 H23 M21.5,479 V482"/>
    <path d="M20,492.5 H23 M21.5,491 V494"/>
    <path d="M20,505.5 H23 M21.5,504 V507"/>
    <path d="M20,517.5 H23 M21.5,516 V519"/>
    <path d="M6,542.5 H9 M7.5,541 V544"/>
    <path d="M6,555.5 H9 M7.5,554 V557"/>
  </g>
  <!-- Vistas icon -->
  <g stroke="#4a4a4a" stroke-width="0.9" fill="none">
    <path d="M16.5,452.6 V450.6 H18.6 M23.4,450.6 H25.5 V452.6 M25.5,457.2 V459.2 H23.4 M18.6,459.2 H16.5 V457.2"/>
    <ellipse cx="21" cy="454.9" rx="2.6" ry="2.5"/>
  </g>
  <!-- Planos icon -->
  <g stroke="#555" stroke-width="0.9" fill="#e8e8e8">
    <path d="M15.9,526.2 H23.6 L26.2,528.6 V533.5 H15.9 Z"/>
    <path d="M17.5,531.8 V528.5 H20 V531.8 M21.5,531.8 V529.6 H24.2" fill="none" stroke="#8a8a8a" stroke-width="0.7"/>
  </g>
  <!-- Familias icon -->
  <g stroke="#4a4a4a" stroke-width="0.9" fill="none">
    <path d="M18.6,538.6 H16.6 V546 H18.6 M23.4,538.6 H25.4 V546 H23.4"/>
    <path d="M18.4,539.8 H21.4 V542.6 H18.4 Z M22.4,540 V544.4 H18.4" stroke="#666" stroke-width="0.8"/>
  </g>
  <!-- Grupos icon -->
  <g stroke="#4a4a4a" stroke-width="0.9" fill="none">
    <path d="M18.4,550.6 H16.4 V559 H18.4 M23.6,550.6 H25.6 V559 H23.6"/>
    <ellipse cx="21" cy="554.8" rx="2" ry="2.9" transform="rotate(-25 21 554.8)" stroke="#666"/>
  </g>
  <!-- link icon -->
  <g stroke="#8a6a10" stroke-width="0.8" fill="#f0c228">
    <rect x="15.8" y="565" width="6" height="4.2" rx="2.1"/>
    <rect x="20.4" y="565" width="6" height="4.2" rx="2.1"/>
  </g>
  <path d="M18,567.1 H19.4 M22.8,567.1 H24.2" stroke="#6d5208" stroke-width="0.9"/>
</svg>


<div class="a" style="left:333.4px;top:116px;width:3px;height:589px;background:#eeeeee;"></div>
<div class="a" id="vp"></div>
<div class="a" id="vscroll"></div>
<div class="a" id="vbar"></div>
<svg style="left:0;top:0" width="1334" height="724" viewBox="0 0 1334 724">
  <defs>
    <radialGradient id="gSh" cx="0.5" cy="0.5" r="0.5"><stop offset="0" stop-color="#b8b8b8" stop-opacity="0.7"/><stop offset="0.6" stop-color="#c8c8c8" stop-opacity="0.38"/><stop offset="1" stop-color="#dddddd" stop-opacity="0"/></radialGradient>
  </defs>
  <!-- window controls in view -->
  <rect x="1285.6" y="126.8" width="8" height="2.8" rx="1.2" fill="#a8a8a8" stroke="#7c7c7c" stroke-width="0.6"/>
  <g fill="#bdbdbd" stroke="#6a6a6a" stroke-width="0.8">
    <rect x="1299.4" y="122" width="5.8" height="5.6" rx="0.8"/>
    <rect x="1297.4" y="124" width="5.8" height="5.8" rx="0.8" fill="#d0d0d0"/>
    <rect x="1299.4" y="126.4" width="1.8" height="3" fill="#f4f4f4" stroke-width="0.5"/>
  </g>
  <path d="M1311.2,123.6 L1317.2,129.6 M1317.2,123.6 L1311.2,129.6" stroke="#6a6a6a" stroke-width="2.6" stroke-linecap="round"/>
  <path d="M1311.2,123.6 L1317.2,129.6 M1317.2,123.6 L1311.2,129.6" stroke="#d6d6d6" stroke-width="1.1" stroke-linecap="round"/>
  <!-- scroll arrows -->
  <g fill="none" stroke="#333" stroke-width="1.2">
    <path d="M1323.8,125 L1326.6,122 L1329.4,125"/>
    <path d="M1323.8,684.4 L1326.6,687.4 L1329.4,684.4"/>
    <path d="M587.6,695.4 L584.8,698 L587.6,700.6"/>
    <path d="M1313,695.4 L1315.8,698 L1313,700.6"/>
  </g>
  <rect x="1321.4" y="399" width="10.6" height="11.7" fill="#cdcdcd"/>
  <rect x="945" y="693" width="12" height="10.6" fill="#cfcfcf"/>
  <!-- size grip -->
  <g fill="#bdbdbd"><rect x="1330" y="697" width="1.4" height="6"/><rect x="1327.6" y="699.4" width="1.4" height="3.6"/><rect x="1325.2" y="701.4" width="1.4" height="1.6"/></g>
  <!-- view cube -->
  <ellipse cx="1279" cy="199" rx="31" ry="14" fill="url(#gSh)"/>
  <g stroke="#a4a4a4" stroke-width="0.7" stroke-linejoin="round">
    <polygon points="1278.8,152.3 1304,163.4 1278.8,177.4 1253.9,163.9" fill="#f4f4f4"/>
    <polygon points="1253.9,163.9 1278.8,177.4 1278.8,206.4 1256.1,193.8" fill="#eeeeee"/>
    <polygon points="1278.8,177.4 1304,163.4 1302.1,190.9 1278.8,206.4" fill="#e8e8e8"/>
  </g>
  <g font-family="Liberation Sans, sans-serif" font-size="5.2" fill="#989898" text-anchor="middle" style="will-change:opacity;opacity:0.999">
    <text transform="matrix(-0.80 -0.354 1.09 -0.506 1281.5 162.5)">SUPERIOR</text>
    <text transform="matrix(-0.73 -0.396 0 -1.3 1267.2 183.2)">POSTERIOR</text>
    <text transform="matrix(-0.78 0.435 0 -1.3 1290.6 183.7)">IZQUIERDA</text>
  </g>
  <!-- nav bar -->
  <rect x="1296" y="220.2" width="24.6" height="81" rx="3.4" fill="#f7f7f7" stroke="#b2b2b2" stroke-width="1"/>
  <circle cx="1315.2" cy="224.6" r="1.9" fill="#dcdcdc" stroke="#a0a0a0" stroke-width="0.8"/>
  <circle cx="1315.2" cy="296.3" r="1.9" fill="#dcdcdc" stroke="#a0a0a0" stroke-width="0.8"/>
  <path d="M1302.6,234.6 H1309.6 C1311.6,234.6 1312.4,235.6 1312.4,237.2 V242 C1312.4,245.6 1309.4,246.8 1306.2,246.8 C1302.6,246.8 1299.8,244.2 1299.8,240.6 C1299.8,237.6 1300.6,234.6 1302.6,234.6 Z" fill="#f0f0f0" stroke="#9c9c9c" stroke-width="0.9"/>
  <circle cx="1305.6" cy="240.6" r="3.1" fill="#fbfbfb" stroke="#9c9c9c" stroke-width="0.9"/>
  <rect x="1309.4" y="243" width="7" height="7" rx="1.4" fill="#8cbcec" stroke="#4a8ed6" stroke-width="0.8"/>
  <rect x="1311" y="244.6" width="3.8" height="3.8" fill="#c2dcf6"/>
  <polygon points="1305.8,255.4 1309.4,255.4 1307.6,257.6" fill="#8a8a8a"/>
  <rect x="1298.6" y="260" width="19" height="0.8" fill="#c8c8c8"/>
  <rect x="1302.8" y="266" width="7" height="8" fill="#a9cc8c" stroke="#98bc7c" stroke-width="0.5"/>
  <circle cx="1311.2" cy="273.6" r="1.9" fill="#f8f8f8" stroke="#7a7a7a" stroke-width="0.8"/>
  <path d="M1312.6,275 L1314.4,277" stroke="#6a6a6a" stroke-width="1.1"/>
  <polygon points="1305.8,284.4 1309.4,284.4 1307.6,286.6" fill="#8a8a8a"/>
  <!-- view control bar icons -->
  <g>
    <rect x="392.4" y="693.4" width="11.4" height="8" rx="0.9" fill="#333"/>
    <rect x="394" y="695.4" width="8.2" height="4.2" fill="#f4f4f4"/>
    <rect x="396.4" y="694.6" width="3.4" height="1.6" fill="#f4f4f4"/><rect x="396.2" y="696.8" width="3.8" height="1.6" fill="#444"/>
    <!-- visual style -->
    <g fill="#c2dcf8" stroke="#2a7ad8" stroke-width="1.1" stroke-linejoin="round">
      <path d="M408,696.4 L410.4,694 H418.2 V699 L415.8,701.4 H408 Z"/>
      <path d="M408,696.4 H415.8 V701.4 M415.8,696.4 L418.2,694" fill="none"/>
    </g>
    <!-- sun path (disabled) -->
    <g stroke="#cacaca" stroke-width="0.8" fill="none">
      <circle cx="425.4" cy="697" r="1.8"/>
      <path d="M425.4,693.4 V694.4 M425.4,699.6 V700.6 M421.8,697 H422.8 M428,697 H429 M422.8,694.4 L423.6,695.2 M428,694.4 L427.2,695.2 M422.8,699.6 L423.6,698.8 M427.2,698.8 L428,699.6"/>
      <path d="M428.4,698 L431.4,701 M431.4,698 L428.4,701" stroke="#d4d4d4"/>
    </g>
    <!-- shadows (disabled) -->
    <g stroke="#c6c6c6" stroke-width="0.8" fill="#ececec">
      <circle cx="441.6" cy="696.6" r="2.6"/>
      <path d="M443.4,698.6 L446.6,701.6 M446.6,698.6 L443.4,701.6" fill="none"/>
    </g>
    <!-- crop view -->
    <g>
      <rect x="452.2" y="694.6" width="7" height="5.4" fill="#7ab0e6" stroke="#2a62b0" stroke-width="0.8"/>
      <path d="M450.4,697.4 H452.2 M454,693 V694.6" stroke="#2a62b0" stroke-width="0.9"/>
      <path d="M455.4,696.2 L460.6,701.2 M460.6,696.2 L455.4,701.2" stroke="#e02a24" stroke-width="1.4"/>
    </g>
    <!-- show crop -->
    <g>
      <rect x="466.8" y="694.8" width="6.6" height="5.2" fill="#7ab0e6" stroke="#2a62b0" stroke-width="0.8"/>
      <path d="M465,697.4 H466.8 M468.6,693 V694.6" stroke="#2a62b0" stroke-width="0.9"/>
      <circle cx="473.6" cy="696.4" r="1.8" fill="#fdf6d8" stroke="#2a62b0" stroke-width="0.7"/>
      <path d="M473.6,698.2 V700.8" stroke="#2a62b0" stroke-width="0.9"/>
    </g>
    <!-- lock 3D -->
    <g stroke="#333" stroke-width="0.8" stroke-linejoin="round">
      <path d="M480.4,697 L484.6,693.4 L489.4,696.6 V700.4 H480.4 Z" fill="#f4f4f4"/>
      <path d="M482.4,700.4 V697.4 H484.4 V700.4" fill="#6a6a6a"/>
      <rect x="485.6" y="698" width="4.4" height="3.6" fill="#58b070" stroke="#2a7a44" stroke-width="0.6"/>
      <path d="M486.6,698 V696.8 C486.6,695.6 489,695.6 489,696.8 V698" fill="none" stroke="#2a7a44" stroke-width="0.7"/>
    </g>
    <!-- temp hide (glasses) -->
    <g stroke="#2a2a2a" stroke-width="0.9" fill="none">
      <path d="M494.6,695.6 L497,698.6"/>
      <ellipse cx="498.6" cy="699.2" rx="2" ry="1.6" fill="#f8f8f8"/>
      <ellipse cx="503" cy="697.2" rx="2" ry="1.6" fill="#f8f8f8"/>
      <path d="M500.4,698.4 L501.2,698 M500.6,694.2 C502,693.6 504.4,694.6 504.8,696.4"/>
    </g>
    <!-- bulb disabled -->
    <g stroke="#cccccc" stroke-width="0.8" fill="#f4f4f4">
      <circle cx="514" cy="696.6" r="1.9"/>
      <path d="M513.2,698.8 H514.8 V700.6 H513.2 Z"/>
    </g>
    <!-- three disabled -->
    <g stroke="#cfcfcf" stroke-width="0.8" fill="#eeeeee">
      <rect x="524.2" y="694.6" width="6.4" height="5.6"/>
      <circle cx="531" cy="699" r="1.8"/>
      <path d="M538,700.6 V696.4 L541.6,694 H546 M540,700.6 V697 M542,700.6 V696.4 M544.4,700.6 V698.4 M546.6,700.8 V699.6" fill="none"/>
      <path d="M554,696.4 L556,694.6 H561.6 V698.6 L559.6,700.6 H554 Z M554,696.4 H559.6 V700.6 M559.6,696.4 L561.6,694.6"/>
      <path d="M556.4,693.6 L558,695.4" fill="none"/>
    </g>
    <!-- reveal constraints -->
    <g stroke="#222" stroke-width="0.9" fill="none">
      <path d="M568,692.2 V696.4 M577.4,692.2 V696.4 M568,694 H577.4" />
      <path d="M569.6,692.8 L568,694 L569.6,695.2 M575.8,692.8 L577.4,694 L575.8,695.2" stroke-width="0.7"/>
      <path d="M568,697.6 V703" stroke-dasharray="1.4 1"/>
      <rect x="573.8" y="699.4" width="4.2" height="3.6" fill="#2a2a2a"/>
      <path d="M574.8,699.4 V698.2 C574.8,697 577,697 577,698.2 V699.4" stroke-width="0.7"/>
    </g>
  </g>

</svg>

<svg id="model" width="1334" height="724" style="left:0;top:0" viewBox="0 0 1334 724">
  <!-- slab -->
  <polygon points="560,410 848.5,574.5 848.5,592.5 560,427" fill="#272c33" stroke="#1b1f24" stroke-width="1" stroke-linejoin="round"/>
  <polygon points="848.5,574.5 1137.5,410 1137.5,426.5 848.5,592.5" fill="#535e6d" stroke="#1b1f24" stroke-width="0.8" stroke-linejoin="round"/>
  <polygon points="849,243 1137.5,410 848.5,574.5 560,410" fill="#6c7a8d" stroke="#23282f" stroke-width="0.8" stroke-linejoin="round"/>
  <!-- skylight flashing -->
  <defs>
    <linearGradient id="gWall" x1="0" y1="0" x2="1" y2="0">
      <stop offset="0" stop-color="#4a7894"/><stop offset="0.25" stop-color="#b4d6e8"/><stop offset="0.6" stop-color="#8fbad2"/><stop offset="1" stop-color="#5a8eab"/>
    </linearGradient>
    <linearGradient id="gFloor" x1="0" y1="0" x2="1" y2="0">
      <stop offset="0" stop-color="#c9e2ef"/><stop offset="1" stop-color="#8fbbd3"/>
    </linearGradient>
    <clipPath id="cHole"><ellipse cx="849" cy="400.4" rx="16.8" ry="9.3"/></clipPath>
  </defs>
  <g stroke-linejoin="round" stroke-linecap="round">
    <polygon points="778,417.2 805,402.4 849.5,376 894,398.5 909.8,407.9 835,450.2" fill="#6a6a6a" stroke="#262626" stroke-width="0.9"/>
    <!-- front-left apron: flat part -->
    <polygon points="784.4,420.9 801.8,410.3 847,435.8 828.6,446.4" fill="#6e6e6e"/>
    <!-- back-left lighter strip -->
    <polygon points="778,417.2 805,402.4 805.4,405.6 801.8,410.3 784.4,420.9" fill="#797979"/>
    <polyline points="784.6,420.4 801.8,410.4" fill="none" stroke="#333" stroke-width="0.7"/>
    <!-- lighter slope next to frame -->
    <polygon points="801.8,410.3 805.2,404.8 850,431.6 848.6,436.4" fill="#8a8a8a"/>
    <polygon points="803.4,407.6 805.2,404.8 850,431.6 849.4,434" fill="#949494"/>
    <!-- front-right strip -->
    <polygon points="828.6,446.4 849,434.8 850.4,436.6 904.8,405.2 909.8,407.9 835,450.2" fill="#666666"/>
    <polygon points="828.6,444 848.6,433 849.6,436 830.4,446.8" fill="#7c7c7c"/>
    <polyline points="828.4,443.9 849,434.8" fill="none" stroke="#3a3a3a" stroke-width="0.7"/>
    <polyline points="830.4,446.6 850,436.4 904.6,405.4" fill="none" stroke="#3a3a3a" stroke-width="0.7"/>
    <polyline points="855,437 902,410" fill="none" stroke="#4c4c4c" stroke-width="0.5"/>
    <!-- outline again -->
    <polyline points="805,402.4 778,417.2 835,450.2 909.8,407.9 894,398.5" fill="none" stroke="#262626" stroke-width="0.9"/>
    <!-- frame side faces -->
    <polygon points="805.4,400.4 850.2,424.6 850.2,434 805.4,405.6" fill="#2e2e2e" stroke="#1e1e1e" stroke-width="0.6"/>
    <polygon points="850.2,424.6 893.6,400.4 893.6,407.3 850.2,434" fill="#6e6e6e" stroke="#2a2a2a" stroke-width="0.6"/>
    <polyline points="850.6,427.8 893.4,403.2" fill="none" stroke="#3e3e3e" stroke-width="0.7"/>
    <polyline points="850.6,430.8 893.4,405.2" fill="none" stroke="#565656" stroke-width="0.6"/>
    <polyline points="806,402.6 850,427.6" fill="none" stroke="#555" stroke-width="0.6"/>
    <ellipse cx="893.2" cy="404.5" rx="1.1" ry="2.6" fill="#9a9a9a"/>
    <!-- frame top rim -->
    <polygon points="849.5,374.3 893.6,400.4 850.2,424.6 805.4,400.4" fill="#4a4846" stroke="#222" stroke-width="0.8"/>
    <polygon points="849.5,376.3 890.4,400.4 850.1,422.8 808.6,400.5" fill="#6f6d6a"/>
    <polygon points="849.5,377.7 888.2,400.4 850.4,421.6 810.8,400.7" fill="#3b3a39"/>
    <!-- glass -->
    <polygon points="849.5,379.3 886.2,400.4 850.8,420.3 812.9,401" fill="#5a8fab" stroke="#2b3a44" stroke-width="0.5"/>
    <!-- hole -->
    <ellipse cx="849" cy="400.4" rx="16.8" ry="9.3" fill="url(#gWall)"/>
    <g clip-path="url(#cHole)">
      <ellipse cx="849" cy="409.7" rx="16.8" ry="9.3" fill="url(#gFloor)" stroke="#2d4452" stroke-width="0.7"/>
    </g>
    <ellipse cx="849" cy="400.4" rx="16.8" ry="9.3" fill="none" stroke="#2d4452" stroke-width="0.7"/>
  </g>
</svg>
<div class="a" id="status"></div>
<svg style="left:0;top:0" width="1334" height="724" viewBox="0 0 1334 724">
  <defs>
    <g id="cur"><path d="M0,0 V6.6 L1.6,5.2 L2.7,7.8 L3.8,7.3 L2.7,4.8 L4.8,4.7 Z" fill="#fafafa" stroke="#3a3a3a" stroke-width="0.7" stroke-linejoin="round"/></g>
  </defs>
  <rect x="1178.6" y="707" width="17.2" height="15" fill="#ececec" opacity="0.7"/><rect x="1267.8" y="707" width="13" height="15" fill="#cfcfcf" opacity="0.55"/>
  <rect x="1196" y="707" width="1" height="15" fill="#d0d0d0"/>
  <rect x="1213.6" y="707" width="1" height="15" fill="#d0d0d0"/>
  <rect x="1231.6" y="707" width="1" height="15" fill="#d0d0d0"/>
  <rect x="1249.6" y="707" width="1" height="15" fill="#d0d0d0"/>
  <!-- links -->
  <g stroke="#a07a10" stroke-width="0.7" fill="#f0c228">
    <rect x="1181.8" y="710.2" width="5.6" height="3.6" rx="1.8"/>
    <rect x="1186.2" y="710.2" width="5.6" height="3.6" rx="1.8"/>
  </g>
  <use href="#cur" x="1185.6" y="711.8"/>
  <!-- underlay -->
  <g fill="none" stroke="#2a72c8" stroke-width="0.9">
    <path d="M1199.2,716.6 L1204.6,711.4 M1199.2,716.6 H1206 M1200.8,714.8 H1205.4"/>
  </g>
  <path d="M1206.2,709.6 L1210,713.2 M1210,709.6 L1206.2,713.2" stroke="#e02a24" stroke-width="1.3"/>
  <use href="#cur" x="1205.2" y="712.6"/>
  <!-- pinned -->
  <g>
    <path d="M1218.6,710 H1224.6 V711.4 H1223.8 V714 H1225.2 V715.4 H1218 V714 H1219.4 V711.4 H1218.6 Z" fill="#f0a050" stroke="#b86a20" stroke-width="0.6"/>
    <path d="M1221.6,715.4 V719.4" stroke="#b86a20" stroke-width="0.9"/>
  </g>
  <use href="#cur" x="1223.2" y="712.2"/>
  <!-- by face -->
  <path d="M1236.4,712 L1241.4,710 V717.6 L1236.4,719.6 Z" fill="#d8ecfc" stroke="#2a72c8" stroke-width="0.9" stroke-linejoin="round"/>
  <path d="M1242,709.6 L1245.8,713.2 M1245.8,709.6 L1242,713.2" stroke="#e02a24" stroke-width="1.3"/>
  <use href="#cur" x="1241.6" y="712.6"/>
  <!-- drag -->
  <g stroke="#222" stroke-width="0.9" fill="none">
    <path d="M1256.4,709.4 V714.6 M1253.8,712 H1259"/>
    <path d="M1255.4,710.4 L1256.4,709.4 L1257.4,710.4 M1255.4,713.6 L1256.4,714.6 L1257.4,713.6 M1254.8,711 L1253.8,712 L1254.8,713 M1258,711 L1259,712 L1258,713" stroke-width="0.6"/>
  </g>
  <use href="#cur" x="1259.4" y="711.6"/>
  <!-- filter -->
  <path d="M1269.2,710.2 H1279.4 L1275.6,714.8 V719.4 H1273 V714.8 Z" fill="#c6c6c6" stroke="#868686" stroke-width="0.9" stroke-linejoin="round"/>
  <!-- bottom border -->
  <rect x="0" y="721.8" width="1334" height="1.6" fill="#2e2e2e"/><rect x="0" y="723.4" width="1334" height="0.6" fill="#cfcfcf"/>
</svg>

<div id="txt" style="position:absolute;left:0;top:0;width:1334px;height:724px;will-change:opacity;opacity:0.999;">
<span class="t" style="left:508.0px;top:2.4px;font-size:8.6px;color:#111;transform:scaleX(0.9295);">Autodesk Revit 2016 -</span>
<span class="t" style="left:598.0px;top:2.4px;font-size:8.6px;color:#111;transform:scaleX(0.8861);">TWF_Roof_Based_V2.5 - Vista 3D: {3D}</span>
<span class="t" style="left:38.5px;top:18.5px;font-size:8.8px;color:#262626;transform:scaleX(0.8864);">Crear</span>
<span class="t" style="left:71.9px;top:18.5px;font-size:8.8px;color:#262626;transform:scaleX(0.9052);">Insertar</span>
<span class="t" style="left:112.7px;top:18.5px;font-size:8.8px;color:#262626;transform:scaleX(0.9644);">Anotar</span>
<span class="t" style="left:151.8px;top:18.5px;font-size:8.8px;color:#262626;transform:scaleX(0.8709);">Vista</span>
<span class="t" style="left:182.9px;top:18.5px;font-size:8.8px;color:#262626;transform:scaleX(0.9098);">Gestionar</span>
<span class="t" style="left:232.1px;top:18.5px;font-size:8.8px;color:#262626;transform:scaleX(0.9532);">Complementos</span>
<span class="t" style="left:302.6px;top:18.5px;font-size:8.8px;color:#262626;transform:scaleX(0.9919);">Modificar</span>
<span class="t" style="left:4.7px;top:83.8px;font-size:8.7px;color:#333;transform:scaleX(0.9228);">Seleccionar</span>
<span class="t" style="left:67.1px;top:83.8px;font-size:8.7px;color:#333;transform:scaleX(0.9058);">Propiedades</span>
<span class="t" style="left:123.5px;top:83.8px;font-size:8.7px;color:#333;transform:scaleX(0.9081);">Portapapeles</span>
<span class="t" style="left:196.4px;top:83.8px;font-size:8.7px;color:#333;transform:scaleX(0.9112);">Geometría</span>
<span class="t" style="left:320.5px;top:83.8px;font-size:8.7px;color:#333;transform:scaleX(1.0071);">Modificar</span>
<span class="t" style="left:429.7px;top:83.8px;font-size:8.7px;color:#333;transform:scaleX(0.9938);">Medir</span>
<span class="t" style="left:465.1px;top:83.8px;font-size:8.7px;color:#333;transform:scaleX(0.8834);">Crear</span>
<span class="t" style="left:513.7px;top:83.8px;font-size:8.7px;color:#333;transform:scaleX(0.9469);">Editor de familias</span>
<span class="t" style="left:13.8px;top:58.6px;font-size:8.7px;color:#1c2a3a;transform:scaleX(0.9872);">Modificar</span>
<span class="t" style="left:127.8px;top:58.9px;font-size:8.7px;color:#b0b0b0;transform:scaleX(0.8625);">Pegar</span>
<span class="t" style="left:195.0px;top:44.0px;font-size:8.7px;color:#222;transform:scaleX(0.9224);">Corte</span>
<span class="t" style="left:195.0px;top:60.8px;font-size:8.7px;color:#222;transform:scaleX(0.9349);">Unir</span>
<span class="t" style="left:494.5px;top:58.8px;font-size:8.7px;color:#222;transform:scaleX(0.8980);">Cargar en</span>
<span class="t" style="left:496.2px;top:69.3px;font-size:8.7px;color:#222;transform:scaleX(0.9391);">proyecto</span>
<span class="t" style="left:547.4px;top:58.8px;font-size:8.7px;color:#222;transform:scaleX(0.9006);">Cargar en</span>
<span class="t" style="left:533.9px;top:69.3px;font-size:8.7px;color:#222;transform:scaleX(0.9480);">proyecto y cerrar</span>
<span class="t" style="left:914.6px;top:2.3px;font-size:8.2px;color:#8a8a8a;transform:scaleX(0.8826);font-style:italic;">Escriba palabra clave o frase</span>
<span class="t" style="left:1104.7px;top:2.3px;font-size:8.7px;color:#222;transform:scaleX(0.9230);">Iniciar sesión</span>
<span class="t" style="left:3.2px;top:116.6px;font-size:8.4px;color:#111;transform:scaleX(0.8711);font-weight:bold;-webkit-text-stroke:0;">Propiedades</span>
<span class="t" style="left:4.4px;top:183.9px;font-size:8.7px;color:#111;transform:scaleX(0.9021);">Familia: Ventanas</span>
<span class="t" style="left:289.7px;top:182.5px;font-size:8.7px;color:#a8a8a8;transform:scaleX(0.9329);">Editar tipo</span>
<span class="t" style="left:3.2px;top:198.2px;font-size:8.7px;color:#111;transform:scaleX(0.9126);">Restricciones</span>
<span class="t" style="left:7.3px;top:210.3px;font-size:8.7px;color:#8a8a8a;transform:scaleX(1.0165);">Anfitrión</span>
<span class="t" style="left:168.7px;top:210.3px;font-size:8.7px;color:#8a8a8a;transform:scaleX(0.9378);">Cubierta</span>
<span class="t" style="left:3.2px;top:223.3px;font-size:8.7px;color:#111;transform:scaleX(0.9427);">Datos de identidad</span>
<span class="t" style="left:7.3px;top:235.4px;font-size:8.7px;color:#111;transform:scaleX(0.9512);">Número OmniClass</span>
<span class="t" style="left:7.3px;top:248.1px;font-size:8.7px;color:#9a9a9a;transform:scaleX(0.9486);">Título OmniClass</span>
<span class="t" style="left:3.2px;top:260.5px;font-size:8.7px;color:#111;transform:scaleX(0.9412);">Otros</span>
<span class="t" style="left:7.3px;top:272.8px;font-size:8.7px;color:#111;transform:scaleX(0.9280);">Siempre vertical</span>
<span class="t" style="left:7.3px;top:285.6px;font-size:8.7px;color:#111;transform:scaleX(0.9309);">Corte con vacíos al cargar</span>
<span class="t" style="left:7.3px;top:297.6px;font-size:8.7px;color:#111;transform:scaleX(0.9843);">Compartido</span>
<span class="t" style="left:7.3px;top:310.3px;font-size:8.7px;color:#111;transform:scaleX(0.9608);">Punto de cálculo de habitación</span>
<span class="t" style="left:3.3px;top:414.2px;font-size:8.7px;color:#1a6fd0;transform:scaleX(0.9390);text-decoration:underline;">Ayuda de propiedades</span>
<span class="t" style="left:292.8px;top:414.4px;font-size:8.7px;color:#9a9a9a;transform:scaleX(0.9562);">Aplicar</span>
<span class="t" style="left:3.3px;top:434.0px;font-size:8.3px;color:#222;transform:scaleX(0.8782);font-weight:bold;-webkit-text-stroke:0;">Navegador de proyectos - TWF_Roof_Based_V2.5</span>
<span class="t" style="left:30.9px;top:448.4px;font-size:8.7px;color:#222;transform:scaleX(0.8959);">Vistas (all)</span>
<span class="t" style="left:33.7px;top:460.9px;font-size:8.7px;color:#222;transform:scaleX(0.9277);">Planos de planta (Floor Plan)</span>
<span class="t" style="left:33.7px;top:473.6px;font-size:8.7px;color:#222;transform:scaleX(0.9292);">Planos de techo (Ceiling Plan)</span>
<span class="t" style="left:33.7px;top:485.7px;font-size:8.7px;color:#222;transform:scaleX(0.9093);">Vistas 3D (3D View)</span>
<span class="t" style="left:33.7px;top:498.4px;font-size:8.7px;color:#222;transform:scaleX(0.9221);">Alzados (Elevation 1)</span>
<span class="t" style="left:33.7px;top:510.9px;font-size:8.7px;color:#222;transform:scaleX(0.9146);">Secciones (Section 1)</span>
<span class="t" style="left:30.9px;top:523.3px;font-size:8.7px;color:#222;transform:scaleX(0.9156);">Planos (all)</span>
<span class="t" style="left:30.9px;top:536.0px;font-size:8.7px;color:#222;transform:scaleX(0.8904);">Familias</span>
<span class="t" style="left:30.9px;top:548.4px;font-size:8.7px;color:#222;transform:scaleX(0.9123);">Grupos</span>
<span class="t" style="left:30.9px;top:560.9px;font-size:8.7px;color:#222;transform:scaleX(0.9200);">Vínculos de Revit</span>
<span class="t" style="left:359.2px;top:692.9px;font-size:7.6px;color:#333;transform:scaleX(0.9945);">1 : 1</span>
<span class="t" style="left:2.1px;top:708.8px;font-size:8.7px;color:#111;transform:scaleX(0.9208);">Clic para seleccionar, TAB para alternar, CTRL para añadir y MAYÚS para anular una selección.</span>
<span class="t" style="left:1281.3px;top:710.4px;font-size:8.6px;color:#333;transform:scaleX(0.8229);font-weight:bold;-webkit-text-stroke:0;">:0</span>
</div>
</body>
</html>
